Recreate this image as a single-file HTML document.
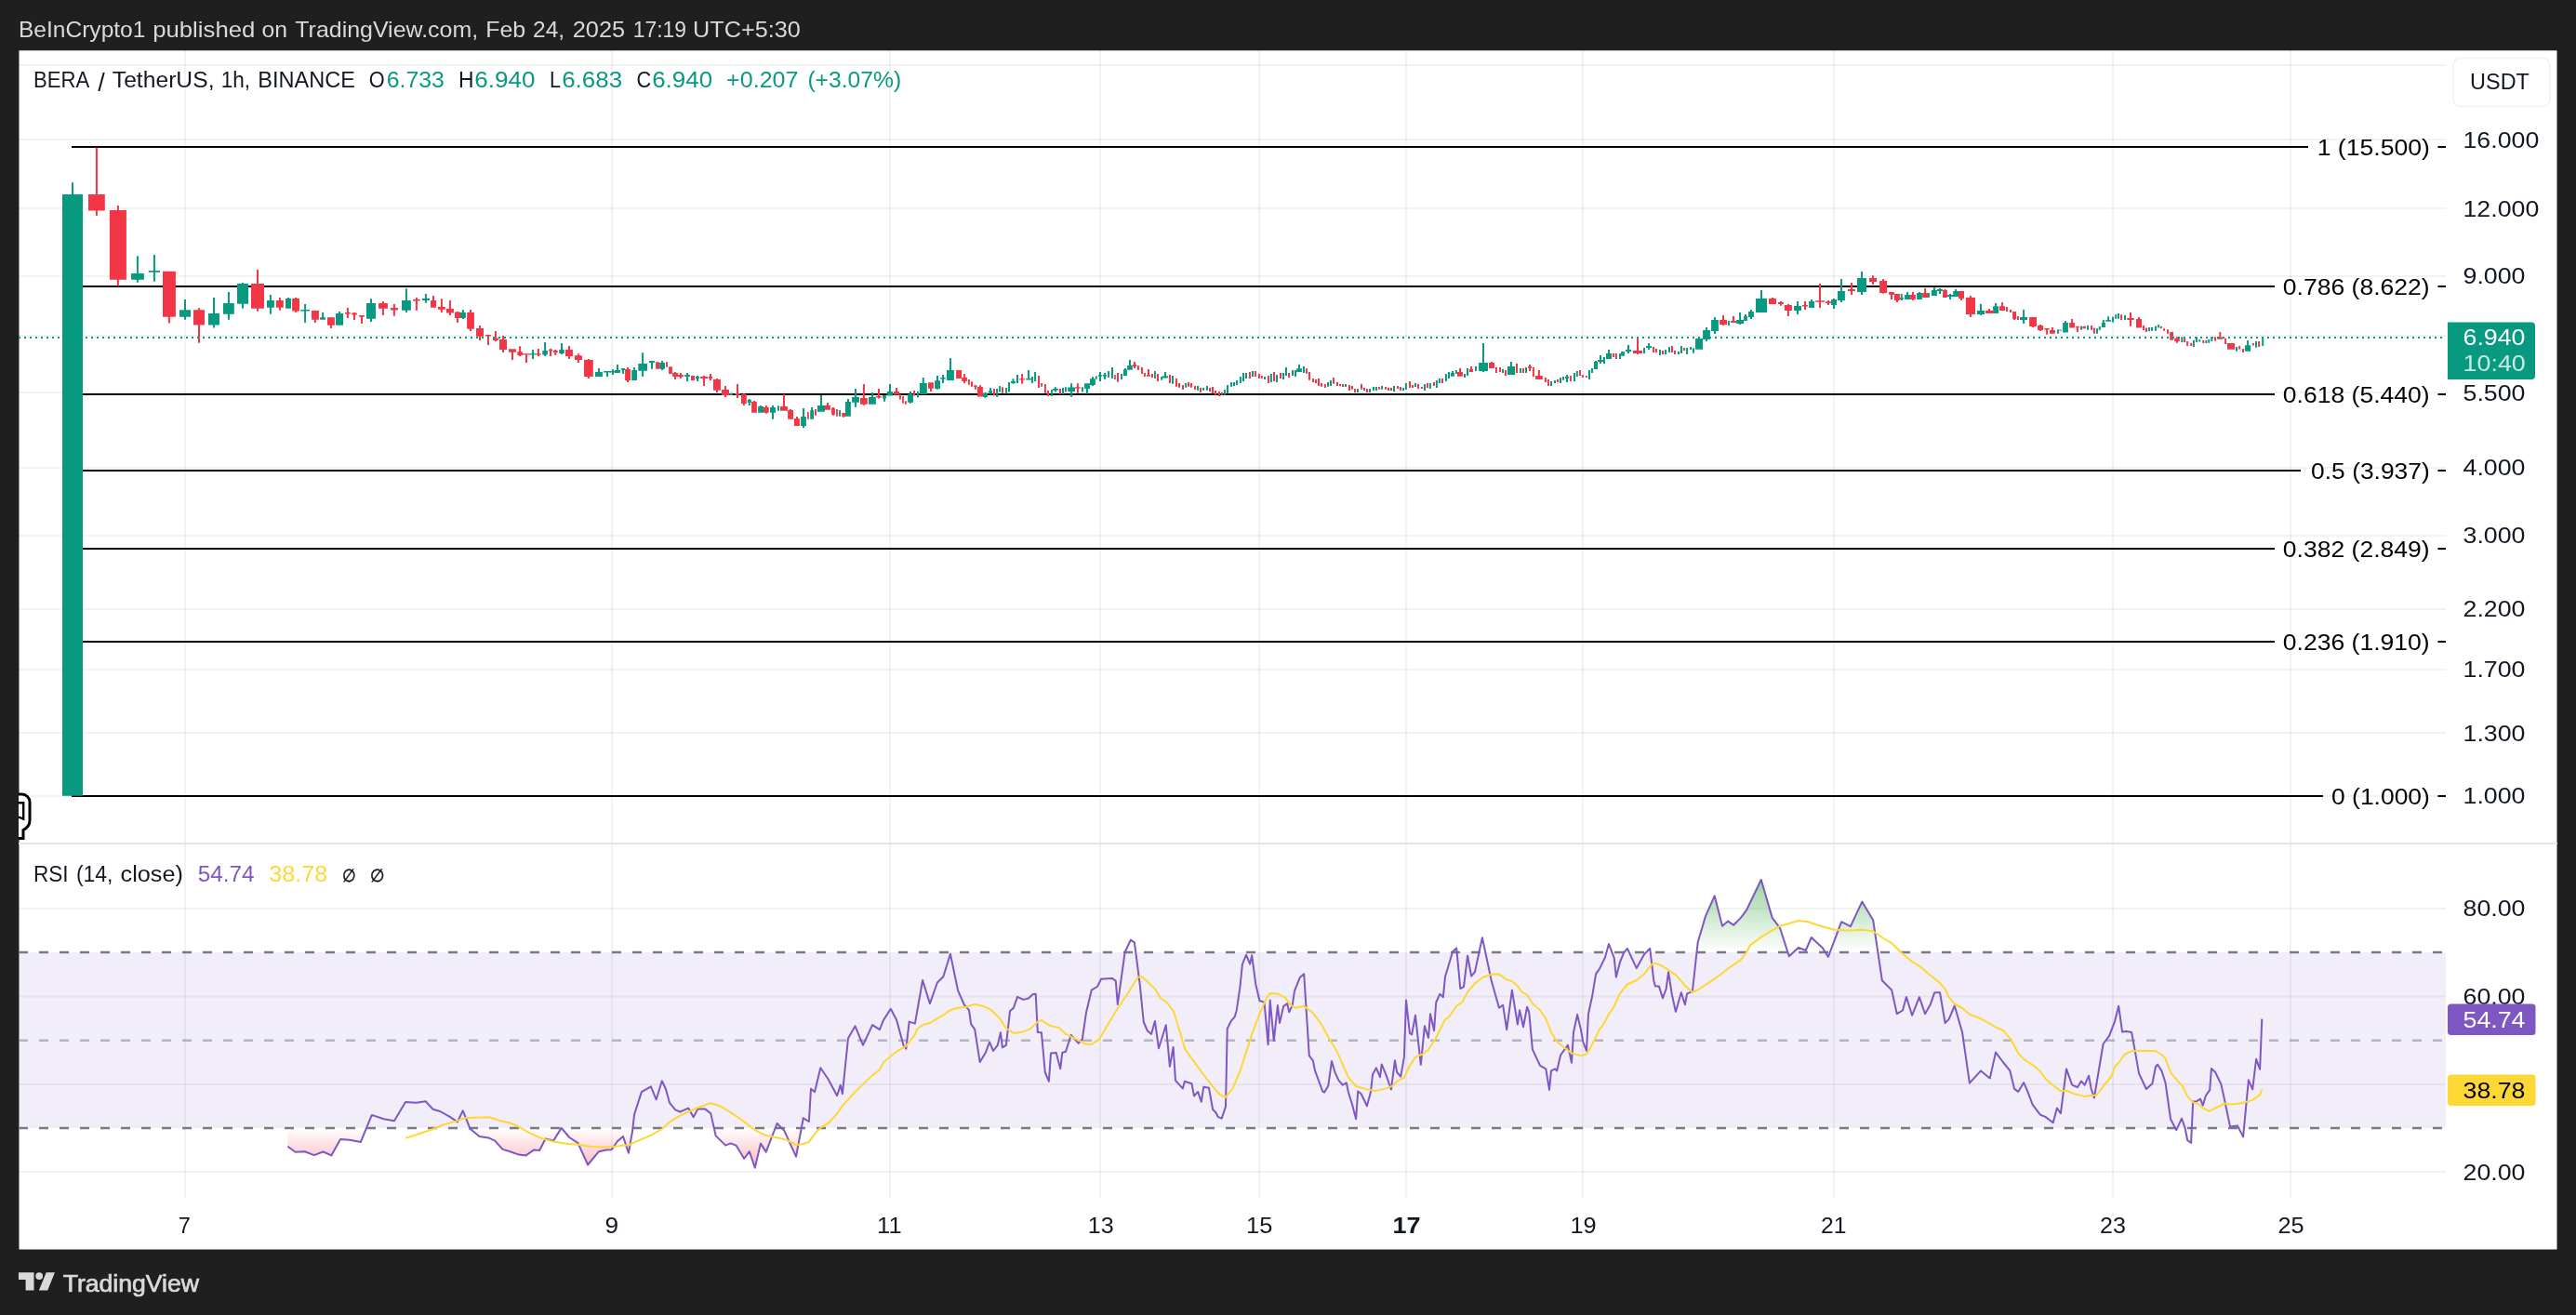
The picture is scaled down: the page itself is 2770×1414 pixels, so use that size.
<!DOCTYPE html><html><head><meta charset="utf-8"><title>BERA / TetherUS chart</title><style>html,body{margin:0;padding:0;background:#1f1f1f;}body{width:2770px;height:1414px;overflow:hidden}svg{display:block;will-change:transform}</style></head><body><svg width="2770" height="1414" viewBox="0 0 2770 1414" font-family='"Liberation Sans", sans-serif'>
<defs>
<linearGradient id="gg" gradientUnits="userSpaceOnUse" x1="0" y1="882" x2="0" y2="1024"><stop offset="0" stop-color="#4caf50" stop-opacity="1"/><stop offset="1" stop-color="#4caf50" stop-opacity="0"/></linearGradient>
<linearGradient id="rg" gradientUnits="userSpaceOnUse" x1="0" y1="1213" x2="0" y2="1333"><stop offset="0" stop-color="#f23645" stop-opacity="0"/><stop offset="1" stop-color="#f23645" stop-opacity="1"/></linearGradient>
<clipPath id="above70"><rect x="20" y="908" width="2610" height="116"/></clipPath>
<clipPath id="below30"><rect x="20" y="1213" width="2610" height="74"/></clipPath>
</defs>
<rect width="2770" height="1414" fill="#1f1f1f"/>
<rect x="20.500" y="54.300" width="2729" height="1289.200" fill="#fff"/>
<path d="M20 70H2630M20 150H2630M20 224H2630M20 297H2630M20 361H2630M20 422H2630M20 503H2630M20 576H2630M20 655H2630M20 720H2630M20 788H2630M20 856H2630M20 977H2630M20 1071.5H2630M20 1166H2630M20 1260H2630" stroke="#0a1a1a" stroke-opacity="0.058" stroke-width="2" fill="none"/>
<path d="M199 54V1288M658 54V1288M957 54V1288M1183 54V1288M1354 54V1288M1512 54V1288M1702 54V1288M1972 54V1288M2272 54V1288M2463 54V1288" stroke="#0a1a1a" stroke-opacity="0.058" stroke-width="2" fill="none"/>
<rect x="20" y="906" width="2730" height="2" fill="#e0e3eb"/>
<rect x="20" y="1024" width="2610" height="189" fill="#7e57c2" fill-opacity="0.1"/>
<polygon clip-path="url(#above70)" fill="url(#gg)" points="309.4,1024 309.4,1232.8 317.6,1238.7 327.7,1238.2 337.7,1242.1 347.5,1238.5 356.3,1242.4 366.1,1225 375.9,1225.8 387.8,1228.1 399.8,1198.9 412.7,1203.3 424,1205.3 436,1185.1 447.6,1185.7 457.7,1184.3 465.5,1192.7 473.2,1195 483.3,1200.6 491.9,1206.4 497.8,1194.3 505.5,1213.7 515.5,1221.9 525.2,1223.4 532.2,1226.6 540.5,1235.9 548.5,1238.2 557.9,1241.6 565.6,1242.4 573.9,1236.6 580.1,1237 586.6,1224.5 595.1,1226.6 603.7,1212.9 612.2,1223 621.5,1229.2 632.1,1252.5 644,1238.2 651.8,1236.6 657.7,1236.3 663.9,1227.3 670,1221.9 675.9,1239.8 680,1216.6 682.1,1198.2 689.9,1174.1 699.9,1168.4 705.7,1182.3 711.8,1162.2 715.9,1171 720,1185.8 726.2,1193.4 731.3,1195.5 740.2,1191.6 745.7,1201.2 750.4,1192.4 758,1192.4 764.2,1197.1 769.7,1221.4 780.2,1231.6 785.7,1229.4 791.5,1231.6 800.1,1245.8 805.9,1238.2 811.8,1255.6 818,1229.6 823.7,1238.6 835.6,1208 843.2,1215.6 856,1243.7 863.8,1202.3 869.9,1206 872,1170.8 876.1,1174.1 882.3,1148.3 890.5,1160.2 900.1,1178.2 903.8,1166.7 905.9,1176.2 912,1116.4 919.6,1103.3 928,1123.8 938.1,1102.1 945.9,1107.2 950,1096.9 957.8,1084.8 964,1096.5 971.6,1124.2 974.3,1127.7 977.7,1098.6 983.9,1100.6 992.1,1054 999.9,1079.1 1007.9,1056.5 1014.3,1050.3 1021.9,1025.7 1030.1,1065.1 1036.9,1080.5 1042,1086.2 1044.1,1101 1048.2,1106.8 1053.7,1142.1 1059.9,1131.8 1064,1120.5 1068.1,1130 1072.8,1123.8 1075.9,1110.3 1077.9,1126.3 1081.9,1123.8 1086,1087.3 1089.9,1083.8 1094,1071.9 1100.4,1074.9 1105.9,1073.5 1110.5,1069.2 1113.7,1068.8 1115.8,1109.9 1119.9,1110.3 1123.8,1153 1127.9,1162.8 1130,1132.4 1135.7,1132 1140.2,1149.3 1142.3,1132 1146,1130.8 1151.7,1112.9 1159.7,1121.8 1163.8,1117.5 1167.9,1089.3 1173.7,1064.7 1179.9,1061 1184,1052.8 1195.9,1051.9 1199.8,1054.8 1201.8,1080.1 1209.6,1024 1215.8,1010.7 1219.9,1013.3 1225.6,1057.5 1229.8,1099 1233.7,1108.2 1238,1111.9 1241.9,1097.9 1246,1127.3 1253.8,1102.3 1257.9,1146.8 1261.6,1125.9 1264,1161.8 1271.8,1170.4 1273.9,1162.8 1281.5,1165.3 1284,1178.6 1288.1,1173.9 1291.8,1184.8 1294.2,1168.8 1300,1169.8 1304.1,1193 1307.6,1196.5 1309.6,1200.8 1313.7,1202.7 1318,1189.9 1319.7,1106.2 1323.6,1098.2 1327.7,1093.4 1329.8,1086.2 1333.4,1061.6 1335.9,1037 1340,1026.7 1344.1,1036.6 1346.2,1027.3 1350.3,1058.5 1354.4,1076 1359.5,1077.6 1363.6,1123.2 1365.7,1075.6 1369.8,1119.1 1373.9,1081.1 1376,1100 1380.1,1082.1 1384.2,1079.1 1386.2,1088.3 1389.7,1081.1 1392,1065.7 1397.9,1050.9 1402.2,1047.2 1407.8,1135.1 1411.9,1140.7 1413.9,1150.9 1422.2,1173.5 1424.2,1174.5 1428.3,1167.4 1432,1141.1 1435.5,1153 1439.6,1161.8 1443.7,1166.7 1447.8,1164.3 1449.9,1174.5 1454,1187.5 1458.1,1203.3 1460.2,1173.5 1463.7,1176.2 1469.9,1189.3 1474,1174.1 1476,1155.4 1479.9,1148.3 1484,1158.1 1485.7,1144.4 1490.4,1155.6 1495.9,1171.5 1500,1140.2 1502.1,1153 1506.2,1157.7 1509.9,1136.6 1512,1075.6 1515.9,1110.9 1518.1,1112.5 1522,1091.8 1527.8,1144.8 1531.9,1103.3 1536,1116 1538,1090.3 1542.1,1108.2 1544.2,1078 1548.3,1068.8 1551.8,1072.3 1554,1050.3 1562.1,1023.2 1566.2,1019.5 1570.3,1063 1574,1061.2 1578.1,1027.7 1582.2,1049.7 1585.9,1045.2 1593.9,1008.2 1603.7,1054.4 1612,1083.8 1616.1,1080.7 1620.2,1107.2 1625.9,1064.7 1631.9,1101.6 1634.1,1086.2 1638,1104.3 1642.1,1082.8 1644.2,1088.3 1647.9,1128.3 1656.1,1145.8 1662.3,1149.3 1666,1171.9 1668,1151.3 1672.1,1149.3 1674.2,1151.5 1678.1,1134.5 1685.9,1123.8 1690,1142.7 1692,1110.3 1696.1,1091 1699.8,1106.4 1702.3,1120.5 1706,1130 1708,1090.3 1712.2,1070.8 1716.1,1047.2 1719.8,1042.1 1725.9,1029.8 1730,1015 1735.8,1030.4 1737.8,1050.7 1741.9,1034.9 1746,1024.6 1749.9,1019.9 1759.8,1041.1 1768,1026.3 1774.2,1019.9 1778.3,1054.4 1779.9,1060.6 1784,1060.6 1787.9,1073.3 1791.6,1063.7 1794.1,1045.2 1797.8,1069.2 1801.9,1087.9 1807.8,1067.2 1811.9,1080.3 1814,1068.6 1819.9,1065.9 1825.7,1013.2 1833.9,985.4 1843.7,963.3 1852,995.7 1858.1,990.6 1864.1,994.7 1871.9,986.9 1878,978.7 1893.8,946 1905.7,986.9 1914,997.8 1923.8,1028.2 1933.9,1018.9 1941.7,1022 1947.8,1008 1959.8,1019.3 1965.9,1029 1980.1,991.2 1989.9,996.1 2002.3,969.6 2014.2,989.5 2023.8,1054.2 2034.1,1064.5 2039.8,1090.2 2046,1086.5 2049.9,1072.1 2056.1,1091.8 2063.9,1072.1 2070,1090.2 2075.8,1079.9 2080.3,1067.2 2086,1067.2 2091.6,1100 2095.7,1095.9 2101.8,1081.5 2110.1,1110.3 2117.9,1164.7 2130,1151.4 2139.8,1159.4 2146,1131.6 2154.2,1142.5 2161.4,1151.4 2166.1,1170.9 2170.2,1173.9 2176.2,1164.1 2180,1172.8 2185.7,1187.9 2193.9,1198.7 2199.4,1200.9 2207.7,1207.3 2211.9,1191.5 2215.9,1197.3 2222,1149.4 2228.2,1166.7 2233.9,1169.2 2237.9,1162.5 2241.8,1166.7 2246.1,1156.6 2248.7,1170.7 2251.9,1180.5 2261.6,1122.5 2268.1,1113.9 2274.1,1098.1 2278.2,1081.8 2282.1,1109.6 2286.4,1108.9 2292.1,1109.9 2296.1,1131.9 2300,1154.1 2307.9,1171 2314.4,1165.2 2318,1147 2320.1,1144.8 2324.5,1151.6 2328.5,1164.2 2334.1,1203.5 2340.3,1215.2 2346,1202.7 2349.6,1212.8 2352.1,1226 2356.1,1228.9 2358.2,1184.6 2361.8,1184.3 2366.1,1181.7 2368.7,1188.6 2371.9,1178.2 2376.2,1172.1 2377.9,1149.1 2382,1152.7 2388.4,1165.9 2392,1182.2 2398.1,1211.6 2406.1,1210.6 2412.1,1222.4 2417.9,1161.3 2422.2,1171.4 2426.1,1138.8 2430.1,1149.8 2432.3,1095.6 2432.3,1024"/>
<polygon clip-path="url(#below30)" fill="url(#rg)" points="309.4,1213 309.4,1232.8 317.6,1238.7 327.7,1238.2 337.7,1242.1 347.5,1238.5 356.3,1242.4 366.1,1225 375.9,1225.8 387.8,1228.1 399.8,1198.9 412.7,1203.3 424,1205.3 436,1185.1 447.6,1185.7 457.7,1184.3 465.5,1192.7 473.2,1195 483.3,1200.6 491.9,1206.4 497.8,1194.3 505.5,1213.7 515.5,1221.9 525.2,1223.4 532.2,1226.6 540.5,1235.9 548.5,1238.2 557.9,1241.6 565.6,1242.4 573.9,1236.6 580.1,1237 586.6,1224.5 595.1,1226.6 603.7,1212.9 612.2,1223 621.5,1229.2 632.1,1252.5 644,1238.2 651.8,1236.6 657.7,1236.3 663.9,1227.3 670,1221.9 675.9,1239.8 680,1216.6 682.1,1198.2 689.9,1174.1 699.9,1168.4 705.7,1182.3 711.8,1162.2 715.9,1171 720,1185.8 726.2,1193.4 731.3,1195.5 740.2,1191.6 745.7,1201.2 750.4,1192.4 758,1192.4 764.2,1197.1 769.7,1221.4 780.2,1231.6 785.7,1229.4 791.5,1231.6 800.1,1245.8 805.9,1238.2 811.8,1255.6 818,1229.6 823.7,1238.6 835.6,1208 843.2,1215.6 856,1243.7 863.8,1202.3 869.9,1206 872,1170.8 876.1,1174.1 882.3,1148.3 890.5,1160.2 900.1,1178.2 903.8,1166.7 905.9,1176.2 912,1116.4 919.6,1103.3 928,1123.8 938.1,1102.1 945.9,1107.2 950,1096.9 957.8,1084.8 964,1096.5 971.6,1124.2 974.3,1127.7 977.7,1098.6 983.9,1100.6 992.1,1054 999.9,1079.1 1007.9,1056.5 1014.3,1050.3 1021.9,1025.7 1030.1,1065.1 1036.9,1080.5 1042,1086.2 1044.1,1101 1048.2,1106.8 1053.7,1142.1 1059.9,1131.8 1064,1120.5 1068.1,1130 1072.8,1123.8 1075.9,1110.3 1077.9,1126.3 1081.9,1123.8 1086,1087.3 1089.9,1083.8 1094,1071.9 1100.4,1074.9 1105.9,1073.5 1110.5,1069.2 1113.7,1068.8 1115.8,1109.9 1119.9,1110.3 1123.8,1153 1127.9,1162.8 1130,1132.4 1135.7,1132 1140.2,1149.3 1142.3,1132 1146,1130.8 1151.7,1112.9 1159.7,1121.8 1163.8,1117.5 1167.9,1089.3 1173.7,1064.7 1179.9,1061 1184,1052.8 1195.9,1051.9 1199.8,1054.8 1201.8,1080.1 1209.6,1024 1215.8,1010.7 1219.9,1013.3 1225.6,1057.5 1229.8,1099 1233.7,1108.2 1238,1111.9 1241.9,1097.9 1246,1127.3 1253.8,1102.3 1257.9,1146.8 1261.6,1125.9 1264,1161.8 1271.8,1170.4 1273.9,1162.8 1281.5,1165.3 1284,1178.6 1288.1,1173.9 1291.8,1184.8 1294.2,1168.8 1300,1169.8 1304.1,1193 1307.6,1196.5 1309.6,1200.8 1313.7,1202.7 1318,1189.9 1319.7,1106.2 1323.6,1098.2 1327.7,1093.4 1329.8,1086.2 1333.4,1061.6 1335.9,1037 1340,1026.7 1344.1,1036.6 1346.2,1027.3 1350.3,1058.5 1354.4,1076 1359.5,1077.6 1363.6,1123.2 1365.7,1075.6 1369.8,1119.1 1373.9,1081.1 1376,1100 1380.1,1082.1 1384.2,1079.1 1386.2,1088.3 1389.7,1081.1 1392,1065.7 1397.9,1050.9 1402.2,1047.2 1407.8,1135.1 1411.9,1140.7 1413.9,1150.9 1422.2,1173.5 1424.2,1174.5 1428.3,1167.4 1432,1141.1 1435.5,1153 1439.6,1161.8 1443.7,1166.7 1447.8,1164.3 1449.9,1174.5 1454,1187.5 1458.1,1203.3 1460.2,1173.5 1463.7,1176.2 1469.9,1189.3 1474,1174.1 1476,1155.4 1479.9,1148.3 1484,1158.1 1485.7,1144.4 1490.4,1155.6 1495.9,1171.5 1500,1140.2 1502.1,1153 1506.2,1157.7 1509.9,1136.6 1512,1075.6 1515.9,1110.9 1518.1,1112.5 1522,1091.8 1527.8,1144.8 1531.9,1103.3 1536,1116 1538,1090.3 1542.1,1108.2 1544.2,1078 1548.3,1068.8 1551.8,1072.3 1554,1050.3 1562.1,1023.2 1566.2,1019.5 1570.3,1063 1574,1061.2 1578.1,1027.7 1582.2,1049.7 1585.9,1045.2 1593.9,1008.2 1603.7,1054.4 1612,1083.8 1616.1,1080.7 1620.2,1107.2 1625.9,1064.7 1631.9,1101.6 1634.1,1086.2 1638,1104.3 1642.1,1082.8 1644.2,1088.3 1647.9,1128.3 1656.1,1145.8 1662.3,1149.3 1666,1171.9 1668,1151.3 1672.1,1149.3 1674.2,1151.5 1678.1,1134.5 1685.9,1123.8 1690,1142.7 1692,1110.3 1696.1,1091 1699.8,1106.4 1702.3,1120.5 1706,1130 1708,1090.3 1712.2,1070.8 1716.1,1047.2 1719.8,1042.1 1725.9,1029.8 1730,1015 1735.8,1030.4 1737.8,1050.7 1741.9,1034.9 1746,1024.6 1749.9,1019.9 1759.8,1041.1 1768,1026.3 1774.2,1019.9 1778.3,1054.4 1779.9,1060.6 1784,1060.6 1787.9,1073.3 1791.6,1063.7 1794.1,1045.2 1797.8,1069.2 1801.9,1087.9 1807.8,1067.2 1811.9,1080.3 1814,1068.6 1819.9,1065.9 1825.7,1013.2 1833.9,985.4 1843.7,963.3 1852,995.7 1858.1,990.6 1864.1,994.7 1871.9,986.9 1878,978.7 1893.8,946 1905.7,986.9 1914,997.8 1923.8,1028.2 1933.9,1018.9 1941.7,1022 1947.8,1008 1959.8,1019.3 1965.9,1029 1980.1,991.2 1989.9,996.1 2002.3,969.6 2014.2,989.5 2023.8,1054.2 2034.1,1064.5 2039.8,1090.2 2046,1086.5 2049.9,1072.1 2056.1,1091.8 2063.9,1072.1 2070,1090.2 2075.8,1079.9 2080.3,1067.2 2086,1067.2 2091.6,1100 2095.7,1095.9 2101.8,1081.5 2110.1,1110.3 2117.9,1164.7 2130,1151.4 2139.8,1159.4 2146,1131.6 2154.2,1142.5 2161.4,1151.4 2166.1,1170.9 2170.2,1173.9 2176.2,1164.1 2180,1172.8 2185.7,1187.9 2193.9,1198.7 2199.4,1200.9 2207.7,1207.3 2211.9,1191.5 2215.9,1197.3 2222,1149.4 2228.2,1166.7 2233.9,1169.2 2237.9,1162.5 2241.8,1166.7 2246.1,1156.6 2248.7,1170.7 2251.9,1180.5 2261.6,1122.5 2268.1,1113.9 2274.1,1098.1 2278.2,1081.8 2282.1,1109.6 2286.4,1108.9 2292.1,1109.9 2296.1,1131.9 2300,1154.1 2307.9,1171 2314.4,1165.2 2318,1147 2320.1,1144.8 2324.5,1151.6 2328.5,1164.2 2334.1,1203.5 2340.3,1215.2 2346,1202.7 2349.6,1212.8 2352.1,1226 2356.1,1228.9 2358.2,1184.6 2361.8,1184.3 2366.1,1181.7 2368.7,1188.6 2371.9,1178.2 2376.2,1172.1 2377.9,1149.1 2382,1152.7 2388.4,1165.9 2392,1182.2 2398.1,1211.6 2406.1,1210.6 2412.1,1222.4 2417.9,1161.3 2422.2,1171.4 2426.1,1138.8 2430.1,1149.8 2432.3,1095.6 2432.3,1213"/>
<path d="M20 1024H2630M20 1213H2630" stroke="#787b86" stroke-width="2.4" stroke-dasharray="10 12" fill="none"/>
<path d="M20 1118.8H2630" stroke="#787b86" stroke-opacity="0.5" stroke-width="2.4" stroke-dasharray="10 12" fill="none"/>
<polyline points="309.4,1232.8 317.6,1238.7 327.7,1238.2 337.7,1242.1 347.5,1238.5 356.3,1242.4 366.1,1225 375.9,1225.8 387.8,1228.1 399.8,1198.9 412.7,1203.3 424,1205.3 436,1185.1 447.6,1185.7 457.7,1184.3 465.5,1192.7 473.2,1195 483.3,1200.6 491.9,1206.4 497.8,1194.3 505.5,1213.7 515.5,1221.9 525.2,1223.4 532.2,1226.6 540.5,1235.9 548.5,1238.2 557.9,1241.6 565.6,1242.4 573.9,1236.6 580.1,1237 586.6,1224.5 595.1,1226.6 603.7,1212.9 612.2,1223 621.5,1229.2 632.1,1252.5 644,1238.2 651.8,1236.6 657.7,1236.3 663.9,1227.3 670,1221.9 675.9,1239.8 680,1216.6 682.1,1198.2 689.9,1174.1 699.9,1168.4 705.7,1182.3 711.8,1162.2 715.9,1171 720,1185.8 726.2,1193.4 731.3,1195.5 740.2,1191.6 745.7,1201.2 750.4,1192.4 758,1192.4 764.2,1197.1 769.7,1221.4 780.2,1231.6 785.7,1229.4 791.5,1231.6 800.1,1245.8 805.9,1238.2 811.8,1255.6 818,1229.6 823.7,1238.6 835.6,1208 843.2,1215.6 856,1243.7 863.8,1202.3 869.9,1206 872,1170.8 876.1,1174.1 882.3,1148.3 890.5,1160.2 900.1,1178.2 903.8,1166.7 905.9,1176.2 912,1116.4 919.6,1103.3 928,1123.8 938.1,1102.1 945.9,1107.2 950,1096.9 957.8,1084.8 964,1096.5 971.6,1124.2 974.3,1127.7 977.7,1098.6 983.9,1100.6 992.1,1054 999.9,1079.1 1007.9,1056.5 1014.3,1050.3 1021.9,1025.7 1030.1,1065.1 1036.9,1080.5 1042,1086.2 1044.1,1101 1048.2,1106.8 1053.7,1142.1 1059.9,1131.8 1064,1120.5 1068.1,1130 1072.8,1123.8 1075.9,1110.3 1077.9,1126.3 1081.9,1123.8 1086,1087.3 1089.9,1083.8 1094,1071.9 1100.4,1074.9 1105.9,1073.5 1110.5,1069.2 1113.7,1068.8 1115.8,1109.9 1119.9,1110.3 1123.8,1153 1127.9,1162.8 1130,1132.4 1135.7,1132 1140.2,1149.3 1142.3,1132 1146,1130.8 1151.7,1112.9 1159.7,1121.8 1163.8,1117.5 1167.9,1089.3 1173.7,1064.7 1179.9,1061 1184,1052.8 1195.9,1051.9 1199.8,1054.8 1201.8,1080.1 1209.6,1024 1215.8,1010.7 1219.9,1013.3 1225.6,1057.5 1229.8,1099 1233.7,1108.2 1238,1111.9 1241.9,1097.9 1246,1127.3 1253.8,1102.3 1257.9,1146.8 1261.6,1125.9 1264,1161.8 1271.8,1170.4 1273.9,1162.8 1281.5,1165.3 1284,1178.6 1288.1,1173.9 1291.8,1184.8 1294.2,1168.8 1300,1169.8 1304.1,1193 1307.6,1196.5 1309.6,1200.8 1313.7,1202.7 1318,1189.9 1319.7,1106.2 1323.6,1098.2 1327.7,1093.4 1329.8,1086.2 1333.4,1061.6 1335.9,1037 1340,1026.7 1344.1,1036.6 1346.2,1027.3 1350.3,1058.5 1354.4,1076 1359.5,1077.6 1363.6,1123.2 1365.7,1075.6 1369.8,1119.1 1373.9,1081.1 1376,1100 1380.1,1082.1 1384.2,1079.1 1386.2,1088.3 1389.7,1081.1 1392,1065.7 1397.9,1050.9 1402.2,1047.2 1407.8,1135.1 1411.9,1140.7 1413.9,1150.9 1422.2,1173.5 1424.2,1174.5 1428.3,1167.4 1432,1141.1 1435.5,1153 1439.6,1161.8 1443.7,1166.7 1447.8,1164.3 1449.9,1174.5 1454,1187.5 1458.1,1203.3 1460.2,1173.5 1463.7,1176.2 1469.9,1189.3 1474,1174.1 1476,1155.4 1479.9,1148.3 1484,1158.1 1485.7,1144.4 1490.4,1155.6 1495.9,1171.5 1500,1140.2 1502.1,1153 1506.2,1157.7 1509.9,1136.6 1512,1075.6 1515.9,1110.9 1518.1,1112.5 1522,1091.8 1527.8,1144.8 1531.9,1103.3 1536,1116 1538,1090.3 1542.1,1108.2 1544.2,1078 1548.3,1068.8 1551.8,1072.3 1554,1050.3 1562.1,1023.2 1566.2,1019.5 1570.3,1063 1574,1061.2 1578.1,1027.7 1582.2,1049.7 1585.9,1045.2 1593.9,1008.2 1603.7,1054.4 1612,1083.8 1616.1,1080.7 1620.2,1107.2 1625.9,1064.7 1631.9,1101.6 1634.1,1086.2 1638,1104.3 1642.1,1082.8 1644.2,1088.3 1647.9,1128.3 1656.1,1145.8 1662.3,1149.3 1666,1171.9 1668,1151.3 1672.1,1149.3 1674.2,1151.5 1678.1,1134.5 1685.9,1123.8 1690,1142.7 1692,1110.3 1696.1,1091 1699.8,1106.4 1702.3,1120.5 1706,1130 1708,1090.3 1712.2,1070.8 1716.1,1047.2 1719.8,1042.1 1725.9,1029.8 1730,1015 1735.8,1030.4 1737.8,1050.7 1741.9,1034.9 1746,1024.6 1749.9,1019.9 1759.8,1041.1 1768,1026.3 1774.2,1019.9 1778.3,1054.4 1779.9,1060.6 1784,1060.6 1787.9,1073.3 1791.6,1063.7 1794.1,1045.2 1797.8,1069.2 1801.9,1087.9 1807.8,1067.2 1811.9,1080.3 1814,1068.6 1819.9,1065.9 1825.7,1013.2 1833.9,985.4 1843.7,963.3 1852,995.7 1858.1,990.6 1864.1,994.7 1871.9,986.9 1878,978.7 1893.8,946 1905.7,986.9 1914,997.8 1923.8,1028.2 1933.9,1018.9 1941.7,1022 1947.8,1008 1959.8,1019.3 1965.9,1029 1980.1,991.2 1989.9,996.1 2002.3,969.6 2014.2,989.5 2023.8,1054.2 2034.1,1064.5 2039.8,1090.2 2046,1086.5 2049.9,1072.1 2056.1,1091.8 2063.9,1072.1 2070,1090.2 2075.8,1079.9 2080.3,1067.2 2086,1067.2 2091.6,1100 2095.7,1095.9 2101.8,1081.5 2110.1,1110.3 2117.9,1164.7 2130,1151.4 2139.8,1159.4 2146,1131.6 2154.2,1142.5 2161.4,1151.4 2166.1,1170.9 2170.2,1173.9 2176.2,1164.1 2180,1172.8 2185.7,1187.9 2193.9,1198.7 2199.4,1200.9 2207.7,1207.3 2211.9,1191.5 2215.9,1197.3 2222,1149.4 2228.2,1166.7 2233.9,1169.2 2237.9,1162.5 2241.8,1166.7 2246.1,1156.6 2248.7,1170.7 2251.9,1180.5 2261.6,1122.5 2268.1,1113.9 2274.1,1098.1 2278.2,1081.8 2282.1,1109.6 2286.4,1108.9 2292.1,1109.9 2296.1,1131.9 2300,1154.1 2307.9,1171 2314.4,1165.2 2318,1147 2320.1,1144.8 2324.5,1151.6 2328.5,1164.2 2334.1,1203.5 2340.3,1215.2 2346,1202.7 2349.6,1212.8 2352.1,1226 2356.1,1228.9 2358.2,1184.6 2361.8,1184.3 2366.1,1181.7 2368.7,1188.6 2371.9,1178.2 2376.2,1172.1 2377.9,1149.1 2382,1152.7 2388.4,1165.9 2392,1182.2 2398.1,1211.6 2406.1,1210.6 2412.1,1222.4 2417.9,1161.3 2422.2,1171.4 2426.1,1138.8 2430.1,1149.8 2432.3,1095.6" fill="none" stroke="#7e57c2" stroke-width="2" stroke-linejoin="round"/>
<polyline points="436,1223.9 447.6,1220.3 465.5,1214.1 476.3,1209.5 490.3,1205.6 499.6,1202.2 512,1201.7 526,1201.2 538.4,1205.3 548.5,1207.5 557.9,1211.5 569.5,1218.3 581.9,1223.9 595.1,1227.6 608.3,1229.7 621.5,1230.7 634.7,1232.8 647.1,1233.5 659.6,1233.1 668.9,1231.7 676.6,1231.2 680,1229.4 699.9,1220.7 711.8,1214 720,1206.4 731.3,1199.6 750.4,1191 764.2,1186.2 774.5,1189.3 785.7,1196.1 800.1,1206 811.8,1215.2 823.7,1221.1 835.6,1223.2 846.3,1225.9 856,1231 863.8,1230 869.9,1227.9 876.1,1219.1 882.3,1212.5 890.5,1208 900.1,1197.5 905.9,1188.9 919.6,1174.1 938.1,1156.1 945.9,1150.5 950,1142.3 964,1130.8 974.3,1124.6 983.9,1112.3 986,1106.8 992.1,1102.1 999.9,1100 1014.3,1091.4 1021.9,1086.2 1030.1,1083.8 1039.3,1082.8 1048.2,1079.7 1057.8,1082.1 1066,1086.2 1070,1090.3 1075.1,1095.1 1081.9,1105.7 1089.9,1110.9 1100.4,1109.4 1108,1106.4 1115.8,1098.6 1119.9,1097.1 1130,1103.3 1138.8,1105.1 1146,1111.9 1159.7,1118.7 1167.9,1122.8 1173.7,1122.8 1181.9,1117.7 1193.2,1098.6 1201.8,1084.2 1211.7,1069.8 1219.9,1056.5 1224,1050.7 1228.1,1050.3 1241.9,1063.2 1248,1073.5 1253.8,1077 1262,1087.3 1268.2,1107.8 1274.3,1128.3 1284,1141.7 1294.2,1155.6 1304.1,1168.4 1311.7,1177 1317.5,1180.1 1325.7,1170.4 1333.4,1151.9 1340,1131.4 1346.2,1111.9 1354.4,1090.3 1361.6,1073.9 1365.7,1068.2 1373.9,1068.4 1382.1,1072.9 1387.3,1080.1 1392.4,1083.8 1402.2,1081.7 1411.9,1089.3 1420.1,1100 1428.3,1115 1437.6,1130.4 1443.7,1144.4 1449.9,1158.5 1458.1,1168 1469.9,1171.5 1479.9,1172.9 1490.4,1170.4 1498,1167.4 1502.1,1162.8 1509.9,1158.7 1515.9,1145.8 1522,1136.6 1529.8,1133.5 1536,1128.7 1544.2,1116 1554,1096.1 1558.2,1093.4 1566.2,1081.7 1572.3,1077.6 1578.1,1066.7 1585.9,1057.5 1593.9,1051.3 1603.7,1047.8 1612,1047.6 1620.2,1053.4 1625.9,1055 1631.9,1060.2 1636,1066.1 1642.1,1069.8 1647.9,1079.1 1656.1,1086.2 1662.3,1095.5 1668,1109.9 1674.2,1120.1 1681.8,1126.3 1690,1132.4 1699.8,1135.1 1706,1133.5 1712.2,1122.8 1719.8,1107.4 1725.9,1098.6 1730,1090.3 1735.8,1082.1 1741.9,1068.4 1749.9,1058.5 1759.8,1054 1768,1047.2 1776.2,1037 1779.9,1035.5 1787.9,1039 1794.1,1043.1 1801.9,1048.3 1808,1055 1811.9,1059.8 1819.9,1067 1825.7,1064.5 1838,1056.3 1852,1046.6 1858.1,1041.5 1871.9,1032.1 1878,1024 1882.1,1016.2 1893.8,1007.6 1905.7,1000.4 1914,995.7 1923.8,993 1933.9,990 1943.7,991 1956.1,995.3 1972.1,999.8 1989.9,1000.4 2002.3,999.8 2014.2,1001.3 2023.8,1008 2034.1,1014.2 2043.9,1023.8 2056.1,1034.1 2063.9,1038.8 2075.8,1048.7 2086,1056.9 2091.6,1063.5 2095.7,1072.3 2101.8,1079.5 2110.1,1084 2117.9,1090.8 2130,1095.3 2139.8,1100.8 2146,1104.5 2154.2,1108.2 2162.4,1117.9 2170.2,1132.3 2176.2,1139 2180,1141.5 2187.2,1146.2 2193.9,1152 2200.1,1160.6 2207.7,1167.1 2215.9,1173.1 2222,1172.8 2230.3,1176.1 2241.8,1179 2248.7,1177.9 2254.7,1177.4 2261.6,1168.1 2270.6,1157 2274.1,1147 2280.6,1139.8 2284.2,1134 2292.1,1130.4 2300,1129.7 2307.9,1130 2318,1130 2324.5,1134 2328.5,1138.3 2334.1,1153.1 2340.3,1160.6 2346.7,1167.8 2352.1,1178.6 2358.2,1185.3 2364.7,1187.6 2368.7,1191.5 2375.5,1194.8 2384.1,1190.5 2392,1186.5 2398.1,1187.5 2406.1,1186.9 2414.3,1185.3 2422.2,1182.9 2430.1,1177.1 2432.3,1171.4" fill="none" stroke="#fdd835" stroke-width="2" stroke-linejoin="round"/>
<path d="M77 158H2482M2621.5 158H2630M89 308H2446M2621.5 308H2630M89 424H2446M2621.5 424H2630M89 506H2474M2621.5 506H2630M89 590H2446M2621.5 590H2630M89 690H2446M2621.5 690H2630M77 856H2498M2621.5 856H2630" stroke="#000" stroke-width="2.2" fill="none"/>
<path d="M67 209H89V855.7H67ZM77 196.2H79V855.7H77ZM141 294H154.9V300.7H141ZM146.9 275.2H148.9V303.7H146.9ZM159.8 290.9H172.1V292.8H159.8ZM164.9 274H166.9V302.7H164.9ZM193 333.2H205V340.7H193ZM198 321.9H200V343.7H198ZM224 337H236V349.6H224ZM229 320H231V352.5H229ZM240 326H251.8V337.7H240ZM244.9 314H246.9V343.7H244.9ZM255 305H267V326.8H255ZM260 304H262V331.8H260ZM287 322.9H294.9V330.8H287ZM289.9 317H291.9V337.7H289.9ZM307 321H313V331.8H307ZM309 320H311V331.8H309ZM323.2 333.1H333V334.6H323.2ZM327.1 327H329.1V346.9H327.1ZM344.1 341.2H350V343.7H344.1ZM346.1 336.1H348.1V343.7H346.1ZM361 337.1H369V349.7H361ZM364 335.1H366V349.7H364ZM394 326H404V342.7H394ZM398 321.2H400V345.9H398ZM432 323H441.9V333.8H432ZM435.9 310.2H437.9V335.9H435.9ZM453.9 321H462V323H453.9ZM456.9 315.9H458.9V325.8H456.9ZM495 336.1H500.9V341.9H495ZM496.9 333.1H498.9V342.9H496.9ZM570 380.2H576V381.6H570ZM572 376.1H574V385.9H572ZM583.3 377.1H588.9V381.6H583.3ZM585.1 368.1H587.1V382.9H585.1ZM601.2 376.1H606.8V379.9H601.2ZM603 369.1H605V380.9H603ZM640 400H647.9V404.9H640ZM643 396H645V404.9H643ZM649.1 399H657V400.6H649.1ZM652 399H654V404.9H652ZM657 399H661V400.6H657ZM658 397H660V402.9H658ZM661 398H666.9V400.9H661ZM663 392H665V400.9H663ZM668.1 396H672.1V398H668.1ZM669.1 396H671.1V401.9H669.1ZM679.2 398H685V408.9H679.2ZM681.1 395H683.1V408.9H681.1ZM686.3 391H696V398.8H686.3ZM690.1 379.2H692.1V404.9H690.1ZM698 388.1H703.9V390H698ZM700 388.1H702V396.8H700ZM709.2 390H715V396.8H709.2ZM711.1 388.1H713.1V398H711.1ZM736.2 403.1H742V404.9H736.2ZM738.1 400.9H740.1V410H738.1ZM748 405.1H751.9V406.9H748ZM749 404.1H751V410H749ZM784.2 422.8H788V425.1H784.2ZM803.8 430.1H807.9V432.9H803.8ZM804.8 429.1H806.8V435.9H804.8ZM815.1 437H821V443.8H815.1ZM817 436H819V443.8H817ZM828 438H834V443.8H828ZM830 436H832V450.8H830ZM836 436.2H838V441.8H836ZM861.1 448.1H866.9V457.9H861.1ZM863 439H865V459.9H863ZM871.2 441H875V450.8H871.2ZM872.1 438H874.1V450.8H872.1ZM879 436H887V442.8H879ZM882 425.1H884V442.8H882ZM902.1 441H904V447.8H902.1ZM909 432H914.9V447.8H909ZM911 429.1H913V447.8H911ZM916.1 427.1H923.9V432.7H916.1ZM919 418H921V437.7H919ZM934 427.1H941.9V434.7H934ZM937 422.1H939V434.7H937ZM949.1 425.1H952.9V428.6H949.1ZM950 425.1H952V431.7H950ZM953.9 421.1H960V425.6H953.9ZM956 413H958V425.6H956ZM976.1 424.1H982V432.7H976.1ZM978 421.1H980V433.7H978ZM986 421.1H987.9V427.6H986ZM988.9 412H996.8V423.9H988.9ZM991.8 406.1H993.8V423.9H991.8ZM1005.1 409.2H1011V418H1005.1ZM1007 404.1H1009V418.8H1007ZM1011.1 406.1H1016.8V407.6H1011.1ZM1013 403.1H1015V412H1013ZM1018 398.1H1025.9V409H1018ZM1021 385H1023V409H1021ZM1057 422.8H1062V427.1H1057ZM1058.5 422H1060.5V427.8H1058.5ZM1063.2 420.1H1066.9V423.8H1063.2ZM1064.1 417.1H1066.1V423.8H1064.1ZM1071.1 418.1H1073.1V426.7H1071.1ZM1074.1 415H1076V421.6H1074.1ZM1081.1 417H1083V423.6H1081.1ZM1084 411.1H1086V421.6H1084ZM1087 410H1091.9V411.9H1087ZM1088.5 407.3H1090.5V412.7H1088.5ZM1093 403H1095V412H1093ZM1103.2 407H1109V408.6H1103.2ZM1105.1 398H1107.1V408.6H1105.1ZM1109 405.1H1111V411.9H1109ZM1112.1 399.9H1114.1V410H1112.1ZM1130 419.1H1131.9V425.9H1130ZM1131.9 418.1H1137.9V419.7H1131.9ZM1133.9 416.2H1135.9V421.6H1133.9ZM1142 417.1H1144V424H1142ZM1145 416.2H1146.9V421.6H1145ZM1148.2 416.4H1156V420.9H1148.2ZM1151.1 412.2H1153.1V426.8H1151.1ZM1163 416.2H1164.9V421.6H1163ZM1166.1 412.2H1172V418H1166.1ZM1168 412.2H1170V423.8H1168ZM1172 407.3H1177.9V413.9H1172ZM1174 405.3H1176V414.9H1174ZM1177.9 404.2H1179.8V407.7H1177.9ZM1181 403H1184.9V404.8H1181ZM1182 400.1H1184V410H1182ZM1186 403H1189.9V404.8H1186ZM1187 401H1189V407.8H1187ZM1191.1 399.1H1193V405.9H1191.1ZM1195 395H1197V406.9H1195ZM1205 402.1H1207V407.9H1205ZM1208 397.2H1211.9V403.9H1208ZM1209 396H1211V403.9H1209ZM1212.1 393.1H1217.9V397.7H1212.1ZM1214 386.9H1216V397.7H1214ZM1241 399H1242.9V406.9H1241ZM1248.1 404.9H1250.1V408.8H1248.1ZM1250.1 404.2H1255.9V406.6H1250.1ZM1252 400.1H1254V406.6H1252ZM1260 404H1262V412.7H1260ZM1274.1 411.9H1276.1V416.8H1274.1ZM1287 415H1289V419.7H1287ZM1293 417H1295V419.7H1293ZM1297 415H1299V419.7H1297ZM1315.9 419.1H1317.9V424.7H1315.9ZM1319 414H1321V423.2H1319ZM1323 411H1325V415.8H1323ZM1326 411H1328V414.9H1326ZM1329 409.1H1331V413.9H1329ZM1332.9 405.1H1334.9V411.9H1332.9ZM1336 401.1H1338V410H1336ZM1339 401.1H1341V406.9H1339ZM1346 399.1H1348V404.9H1346ZM1359 405.1H1361V407.9H1359ZM1365.9 402H1367.9V410.9H1365.9ZM1372 403H1374V410.9H1372ZM1379 401.1H1381V407.9H1379ZM1382 395H1384V403.9H1382ZM1389 398.1H1391V403.9H1389ZM1392 398.1H1394V404.9H1392ZM1394.1 396.2H1399.9V399.9H1394.1ZM1396 392.1H1398V399.9H1396ZM1401 394.1H1403V400.9H1401ZM1427 411H1429V415.8H1427ZM1430 409.1H1432V414.9H1430ZM1446 413H1448V415.9H1446ZM1459 417.9H1461V421.9H1459ZM1471.9 417.9H1473.9V421.9H1471.9ZM1476 415.9H1478V420H1476ZM1479 415.9H1481V420H1479ZM1485 414.9H1487V418.8H1485ZM1498 414.9H1500V421H1498ZM1508 416.9H1510V420H1508ZM1510.9 412H1512.9V419H1510.9ZM1521 412H1523V415.9H1521ZM1531 413H1533V420H1531ZM1536.9 412H1538.9V417.9H1536.9ZM1543.9 408.9H1545.9V416.9H1543.9ZM1546.9 407H1548.9V412H1546.9ZM1553.9 402H1555.9V410H1553.9ZM1557 399.9H1559V406.9H1557ZM1560 400.9H1563.9V404.8H1560ZM1561 399H1563V404.8H1561ZM1564.9 398H1566.9V402H1564.9ZM1574 402H1576V406H1574ZM1577 396.1H1579V404.1H1577ZM1586 394.1H1588V399H1586ZM1590.1 390.1H1600V399H1590.1ZM1594 369.1H1596V399.9H1594ZM1615 397.1H1617V400.9H1615ZM1621 394.1H1629.1V402.9H1621ZM1624 389.1H1626V402.9H1624ZM1634 396H1636V400.9H1634ZM1640 395.1H1642V400.9H1640ZM1667 410H1669V415H1667ZM1671 409H1673V411.9H1671ZM1677 405.9H1679V411.9H1677ZM1680 404.9H1682V408.8H1680ZM1683 404.9H1686.9V406.9H1683ZM1684 403H1686V411H1684ZM1692 400.9H1694V410H1692ZM1694.9 398.9H1696.9V404.9H1694.9ZM1708 398.1H1710V407.9H1708ZM1711 396H1713V400.9H1711ZM1713.9 389H1718V396.9H1713.9ZM1715 388H1717V396.9H1715ZM1718 387.1H1724V389H1718ZM1720 382H1722V391.1H1720ZM1724 384.1H1726V391.1H1724ZM1727 380.1H1733V385.9H1727ZM1729 376H1731V385.9H1729ZM1741 380.1H1743V385.9H1741ZM1743.1 378H1746.9V382.8H1743.1ZM1748 376H1754.1V378H1748ZM1750 371H1752V380.1H1750ZM1767 374H1769V380.1H1767ZM1770 371.9H1776V373.9H1770ZM1772 369H1774V376H1772ZM1784 376H1786V382H1784ZM1790 376H1792V381H1790ZM1794 373.1H1796V379.1H1794ZM1804 378H1806V381H1804ZM1807 371.9H1809V380.1H1807ZM1813 374H1815V381H1813ZM1817 373.1H1819V376H1817ZM1820 374.2H1822V379.8H1820ZM1823 364.1H1831V375.8H1823ZM1826 362.2H1828V375.8H1826ZM1831.1 355.1H1838.9V364.9H1831.1ZM1834 352.1H1836V366.9H1834ZM1840.1 344.1H1847.9V356H1840.1ZM1843 341.1H1845V358.9H1843ZM1857.9 345H1859.9V349.9H1857.9ZM1867.1 344.1H1875.1V348H1867.1ZM1870.1 336H1872.1V349H1870.1ZM1875.1 340.1H1878.9V345H1875.1ZM1876 338.1H1878V345H1876ZM1880 335H1885.9V341H1880ZM1882 333.1H1884V343H1882ZM1888 321.1H1900.1V336H1888ZM1893 312.1H1895V336H1893ZM1929 329.1H1937V334H1929ZM1932 324H1934V338H1932ZM1945.1 324H1951.1V330.9H1945.1ZM1947.1 322H1949.1V330.9H1947.1ZM1969 322H1975V328H1969ZM1971 321H1973V331.9H1971ZM1976 313.1H1983.9V323H1976ZM1979 300.1H1981V324.9H1979ZM1997 299.1H2007V313.9H1997ZM2001 292.1H2003V316.9H2001ZM2043.1 320.1H2046.6V322H2043.1ZM2043.8 316H2045.8V323H2043.8ZM2048.1 317H2054V321.9H2048.1ZM2050.1 314H2052.1V321.9H2050.1ZM2061.1 315H2066.9V321.9H2061.1ZM2063 314H2065V321.9H2063ZM2072.9 315H2074.9V319.9H2072.9ZM2076.9 311.9H2082.9V318H2076.9ZM2078.9 309.1H2080.9V318H2078.9ZM2083.1 311H2088.9V312.9H2083.1ZM2085 310H2087V316H2085ZM2093.9 317H2100.2V318.9H2093.9ZM2096.1 316H2098.1V321.9H2096.1ZM2100.2 313.1H2106V318.9H2100.2ZM2102.1 311H2104.1V318.9H2102.1ZM2125.9 334.1H2134.1V337.9H2125.9ZM2129 327.1H2131V338.9H2129ZM2143.1 329.2H2149.1V336.9H2143.1ZM2145.1 326.1H2147.1V336.9H2145.1ZM2172 341H2180.1V344H2172ZM2175.1 333H2177.1V347.9H2175.1ZM2212.1 354.2H2214.1V358.8H2212.1ZM2214.8 354.5H2216.8V355.7H2214.8ZM2218.1 347H2223.9V357.6H2218.1ZM2220 345.2H2222V357.6H2220ZM2237 350.7H2239V354.7H2237ZM2244 350.1H2246V354.7H2244ZM2254 353.2H2256V358.8H2254ZM2256.8 351H2258.8V355.1H2256.8ZM2259.9 347H2263.9V352H2259.9ZM2260.9 343.9H2262.9V352H2260.9ZM2264.3 343.9H2269.9V345.8H2264.3ZM2266.1 340.2H2268.1V345.8H2266.1ZM2271 340.8H2273V346.4H2271ZM2274.1 338.3H2276.1V342.7H2274.1ZM2277 337.1H2279V342.7H2277ZM2284 338.9H2286V343.9H2284ZM2310.1 352H2312.1V356.3H2310.1ZM2313 352H2315V355.7H2313ZM2317 350.7H2319V355.7H2317ZM2320.1 348.9H2322.1V352.6H2320.1ZM2345.3 362.2H2347.3V367.9H2345.3ZM2357.9 365.7H2359.9V372.9H2357.9ZM2361 362.2H2363V367.9H2361ZM2364.2 365H2366.2V367.5H2364.2ZM2371.4 365.7H2373.4V369H2371.4ZM2374.2 365H2376.2V368.8H2374.2ZM2377.3 362.2H2379.3V366.9H2377.3ZM2404 372.9H2406V377.8H2404ZM2414 371.2H2420.2V377.8H2414ZM2416.1 365.9H2418.1V377.8H2416.1ZM2425 367.1H2427V373.7H2425ZM2432.2 362.2H2434.2V371.9H2432.2Z" fill="#089981"/>
<path d="M95 209H112.8V226.6H95ZM102.9 158.4H104.9V232H102.9ZM117.9 226H135.9V300.7H117.9ZM125.9 221H127.9V307.7H125.9ZM175 291.8H188.9V340.7H175ZM180.9 291.8H182.9V347.6H180.9ZM208 333.2H220V349.6H208ZM213 331.2H215V368.8H213ZM270 305H284V331.8H270ZM276 290H278V334.8H276ZM296.9 323H304.8V330.8H296.9ZM299.9 320H301.9V333.8H299.9ZM314.1 321H322V334.6H314.1ZM317.1 320H319.1V336.1H317.1ZM335 334.1H342.9V343.7H335ZM337.9 334.1H339.9V346.9H337.9ZM352 341.2H359.9V349.7H352ZM354.9 341.2H356.9V353H354.9ZM371 336.1H376.9V337.6H371ZM372.9 331H374.9V341.9H372.9ZM378.2 336.6H383.8V338.6H378.2ZM380 336H382V343.9H380ZM386.1 339.1H391.8V340.7H386.1ZM388 339.1H390V347.9H388ZM407 326H416.9V331.8H407ZM410.9 324H412.9V338.9H410.9ZM419.9 331.1H427.9V333.6H419.9ZM422.9 327H424.9V339.8H422.9ZM444 322H451.9V323.5H444ZM446.9 320H448.9V333.9H446.9ZM463 323H469V330.8H463ZM465 318.1H467V330.8H465ZM470.9 330H478.8V332.8H470.9ZM473.9 321.2H475.9V335.9H473.9ZM480 332.1H487.9V336.6H480ZM482.9 323H484.9V338.9H482.9ZM489 335.6H495V341.9H489ZM491 335H493V346.9H491ZM502.1 336.1H509.9V353.8H502.1ZM505 333.1H507V356H505ZM512 353.1H520V361.8H512ZM515 350H517V365.9H515ZM522 360.1H527.9V361.6H522ZM524 360.1H526V370.9H524ZM529.9 363.4H535.9V365.9H529.9ZM531.9 356.1H533.9V366.9H531.9ZM537 364.9H545V376H537ZM540 361.1H542V379H540ZM547 375.3H554.9V378.8H547ZM550 375.3H552V386.9H550ZM556.4 378.2H561.9V381.9H556.4ZM558.1 372.3H560.1V382.9H558.1ZM561.9 380.2H570V381.6H561.9ZM565 380.2H567V390H565ZM576 380.2H581.8V381.6H576ZM577.9 375.1H579.9V382.9H577.9ZM590.2 375.8H593.9V377.8H590.2ZM591 375H593V382.9H591ZM594.9 377.1H599.8V378.9H594.9ZM596.3 376.1H598.3V381.9H596.3ZM608 376.1H615.9V382.9H608ZM611 372.1H613V385.9H611ZM617.9 382.2H625.9V386.9H617.9ZM620.9 380.2H622.9V390H620.9ZM628 386.9H637.8V404.9H628ZM631.9 386H633.9V406.9H631.9ZM672.1 397H678V408.9H672.1ZM674 395H676V411H674ZM705.1 389.2H709.2V396.8H705.1ZM716 389.2H718V394.8H716ZM719.1 394.2H722.9V401.9H719.1ZM723.1 400.9H728.9V404.9H723.1ZM725 400H727V407.9H725ZM728.9 403.1H734.9V404.9H728.9ZM730.9 400.9H732.9V406.9H730.9ZM743 404.1H747V408.9H743ZM753.1 405.1H761V406.9H753.1ZM756 404.1H758V415H756ZM762 405.1H766V406.9H762ZM763 402.1H765V408.9H763ZM767 407.9H774.9V419.7H767ZM770 407H772V422H770ZM775.9 419H784V425.1H775.9ZM779 415H781V427.1H779ZM790 423.1H796V424.6H790ZM792 413H794V428.1H792ZM797 424.1H802.8V433.9H797ZM798.9 423H800.9V435.9H798.9ZM808.1 432H813.9V443.8H808.1ZM810 431H812V443.8H810ZM821 438H826.8V443.8H821ZM822.9 436H824.9V444.8H822.9ZM839 437H846.9V441.8H839ZM842 424.1H844V441.8H842ZM847.1 441H853V450.8H847.1ZM849 440H851V450.8H849ZM854 450.1H859.9V457.9H854ZM856 448.1H858V457.9H856ZM868.1 443.1H869.9V450.8H868.1ZM876 440H878V446.8H876ZM887 436H892.9V440.7H887ZM889 433H891V440.7H889ZM894.1 439H897.9V445.8H894.1ZM895 438H897V446.8H895ZM899.1 440H900.9V447.8H899.1ZM905.2 444.1H909V447.8H905.2ZM906.1 444.1H908.1V448.8H906.1ZM925 428.1H932.8V434.7H925ZM927.9 413H929.9V435.7H927.9ZM942.1 426.1H947.9V427.6H942.1ZM944 418H946V428.6H944ZM961 421.1H967V424.6H961ZM963 417H965V424.6H963ZM967 424.1H968.9V429.6H967ZM970.1 426.1H971.9V433.7H970.1ZM972.9 431.2H974.9V434.7H972.9ZM982 420.1H984V425.6H982ZM998 411.2H1003.9V417.8H998ZM1000 411.2H1002V420.9H1000ZM1028.1 398.1H1034V406.9H1028.1ZM1034.2 406.1H1039.9V410H1034.2ZM1036.1 402.1H1038.1V412H1036.1ZM1040.9 408.1H1042.9V413.8H1040.9ZM1044 410.2H1046V415.8H1044ZM1047 414.2H1050.8V415.8H1047ZM1047.9 414.2H1049.9V418.8H1047.9ZM1051 416H1056.9V426.6H1051ZM1053 414.2H1055V426.6H1053ZM1068 418.1H1070V425.5H1068ZM1077 416.2H1079V422.8H1077ZM1096.2 407.3H1101.9V408.6H1096.2ZM1098.1 402H1100.1V412.7H1098.1ZM1116 404H1118V417H1116ZM1119.1 411.9H1121V415.8H1119.1ZM1123 413.1H1124.9V422.8H1123ZM1125.9 420.1H1128V425.9H1125.9ZM1138.9 418.1H1141V424H1138.9ZM1156 416.2H1161.8V417.5H1156ZM1157.9 412.2H1159.9V422.8H1157.9ZM1198.1 403H1199.8V407.9H1198.1ZM1201 401.1H1203V410.8H1201ZM1217.9 392H1222V393.9H1217.9ZM1219 389H1221V396H1219ZM1223 392.9H1224.9V398H1223ZM1227 395H1229V402H1227ZM1230 401.1H1231.9V404.9H1230ZM1233 403H1236.9V404.8H1233ZM1234 396.9H1236V404.8H1234ZM1238 402.1H1240V405.9H1238ZM1243.9 402.1H1246V410H1243.9ZM1257 403H1259V411.9H1257ZM1264 407H1266V415.8H1264ZM1267 411.9H1269V416.8H1267ZM1271 414H1273V418.9H1271ZM1277 411H1279V415.8H1277ZM1280 411.9H1282V416.8H1280ZM1284 415H1286V418.9H1284ZM1290 417H1292V421.8H1290ZM1300 417H1302V420.9H1300ZM1303 416H1305V423.2H1303ZM1306 420.1H1308V424.7H1306ZM1310 421H1312V425.9H1310ZM1313 422H1315V424.7H1313ZM1342.9 400.1H1344.9V406.9H1342.9ZM1348.9 399.1H1350.9V404.9H1348.9ZM1352.9 402H1354.9V406.9H1352.9ZM1355.8 404H1357.8V406.9H1355.8ZM1363 404H1365V411.9H1363ZM1369 400.1H1371V410H1369ZM1376 401.1H1378V406.9H1376ZM1385 401.1H1387V405.9H1385ZM1404 396.2H1406V401.8H1404ZM1407 400.1H1409V408.8H1407ZM1411 407H1413V410.9H1411ZM1414 408H1416V411.9H1414ZM1417 407H1419V415H1417ZM1420 411.9H1422V415.8H1420ZM1423.9 413.1H1425.9V417H1423.9ZM1433 406.1H1435V412.7H1433ZM1437 411.1H1439V414.9H1437ZM1440 413H1442V414.9H1440ZM1443 413H1445V415.9H1443ZM1450 414H1452V420H1450ZM1453 414.9H1455V418.8H1453ZM1456 417.9H1458V421.9H1456ZM1463 413H1465V418.8H1463ZM1466 416.9H1468V420H1466ZM1469 417.9H1471V421.9H1469ZM1482 415.9H1484V418.8H1482ZM1489 415.9H1491V418.8H1489ZM1492 416.9H1494V420H1492ZM1495 416.9H1497V420H1495ZM1502 414.9H1504V417.9H1502ZM1505 415.9H1507V420H1505ZM1515 410H1517V416.9H1515ZM1518 414H1520V416.9H1518ZM1524 413H1526V417.9H1524ZM1528 415.9H1530V417.9H1528ZM1534 412H1536V416.9H1534ZM1541 411H1543V414.9H1541ZM1550 407H1552V412H1550ZM1567 400H1572.9V404.8H1567ZM1569 396.1H1571V404.8H1569ZM1580 397.1H1584V399.9H1580ZM1581 394.1H1583V399.9H1581ZM1601 390.1H1607V395.9H1601ZM1603 389.1H1605V395.9H1603ZM1608 395.1H1610V400.9H1608ZM1612 395.1H1614V399.9H1612ZM1618 398H1620V404.1H1618ZM1630 391.1H1632V400.9H1630ZM1637 396H1639V400.9H1637ZM1643.1 394.1H1646.9V396H1643.1ZM1644 392.1H1646V398.9H1644ZM1647.9 395.1H1649.9V404.9H1647.9ZM1651.1 404.1H1658.8V407.9H1651.1ZM1653.9 398.1H1655.9V407.9H1653.9ZM1660.9 405.9H1662.9V411H1660.9ZM1664 407.9H1666V415H1664ZM1674 408H1676V411H1674ZM1687.9 404H1689.9V410H1687.9ZM1698 398.1H1700V404H1698ZM1700.9 403H1702.9V405.9H1700.9ZM1704.9 404H1706.9V405.9H1704.9ZM1733.9 380.1H1735.9V384.1H1733.9ZM1736.9 380.1H1738.9V385.9H1736.9ZM1755.9 377H1766V380.1H1755.9ZM1760 363H1762V381H1760ZM1777 373.1H1779V379.1H1777ZM1780 375H1782V379.1H1780ZM1787 377H1789V381H1787ZM1797 371.9H1799V379.1H1797ZM1800 377H1802V381H1800ZM1810 374H1812V377H1810ZM1849.1 344.1H1857V349H1849.1ZM1852 339.1H1854V349.9H1852ZM1861 345.1H1867.1V347.1H1861ZM1863 340.1H1865V347.1H1863ZM1902 321.1H1910V326.9H1902ZM1905 320.1H1907V326.9H1905ZM1911.9 325.1H1917.9V326.9H1911.9ZM1913.9 324H1915.9V328.8H1913.9ZM1918.9 328H1926.9V333.9H1918.9ZM1921.9 327H1923.9V340.1H1921.9ZM1938 328H1944.1V329.6H1938ZM1940 324H1942V332.9H1940ZM1952.1 323.2H1961.9V324.7H1952.1ZM1956 305.1H1958V331H1956ZM1963 324.2H1969V325.9H1963ZM1965 323H1967V328H1965ZM1987 311.1H1994.9V313.1H1987ZM1990 304.1H1992V316.9H1990ZM2009.9 299.1H2018V303H2009.9ZM2013 296.2H2015V305.9H2013ZM2021.1 302H2029.1V315H2021.1ZM2024.1 300.1H2026.1V315.8H2024.1ZM2031.1 314H2036.9V317H2031.1ZM2033 314H2035V321.9H2033ZM2037 316H2042.9V323H2037ZM2039 316H2041V325H2039ZM2054.1 317H2059.9V321.9H2054.1ZM2056 314H2058V323H2056ZM2067.1 315H2073V319.9H2067.1ZM2069.1 310H2071.1V319.9H2069.1ZM2089.1 311.9H2093.9V319.9H2089.1ZM2090.5 311H2092.5V319.9H2090.5ZM2106 313.1H2112V320.9H2106ZM2108 313.1H2110V323H2108ZM2113.9 320.1H2124V338.1H2113.9ZM2117.9 318.1H2119.9V341H2117.9ZM2135.1 334.1H2143.1V336.9H2135.1ZM2138.1 332.1H2140.1V336.9H2138.1ZM2150 329.2H2156.1V334.1H2150ZM2152.1 325H2154.1V334.1H2152.1ZM2157 329.9H2159V335.1H2157ZM2161 333H2163V336H2161ZM2164.1 335.1H2168.1V343H2164.1ZM2165.1 335.1H2167.1V344H2165.1ZM2169 340H2171V344H2169ZM2182.1 341H2190V351H2182.1ZM2185.1 341H2187.1V351.9H2185.1ZM2191 350H2197.1V355H2191ZM2193.1 349H2195.1V356H2193.1ZM2198.4 353H2203.7V354.5H2198.4ZM2200.1 353H2202.1V359.7H2200.1ZM2204 355.1H2209.9V358.8H2204ZM2205.9 352H2207.9V358.8H2205.9ZM2225.2 347H2231V352.6H2225.2ZM2227.1 343H2229.1V352.6H2227.1ZM2232.2 350.7H2235.7V352.6H2232.2ZM2232.9 350.7H2234.9V357H2232.9ZM2239.4 350.7H2242.9V353.2H2239.4ZM2248 350.1H2250V354.7H2248ZM2250.9 352.6H2252.9V358.8H2250.9ZM2280.1 338.3H2282.1V343.9H2280.1ZM2287.3 342H2294.7V343.9H2287.3ZM2290 336.1H2292V350.7H2290ZM2297 343H2303V352.6H2297ZM2299 341.1H2301V352.6H2299ZM2304 350.1H2306V355.1H2304ZM2307 352.6H2309V357H2307ZM2322.9 350.7H2324.9V353.2H2322.9ZM2326 353.2H2328V355.7H2326ZM2330 354.2H2332V358.8H2330ZM2333.2 357H2337V365.7H2333.2ZM2338.2 363.8H2343.8V366.9H2338.2ZM2340 362.2H2342V368.8H2340ZM2348.1 363.8H2350.1V368.1H2348.1ZM2351.1 367.1H2353.1V372.1H2351.1ZM2355.2 368.8H2357.2V371.9H2355.2ZM2368.3 365.7H2370.3V369H2368.3ZM2381 362.2H2383V366.6H2381ZM2384.2 362.5H2390.4V364.7H2384.2ZM2386.3 357H2388.3V364.7H2386.3ZM2392.1 363.8H2394.1V370H2392.1ZM2395 369H2403V375.8H2395ZM2407.1 372.1H2409.1V375.6H2407.1ZM2411.1 375H2413.1V379.1H2411.1ZM2421.9 369H2423.9V371.6H2421.9ZM2428.1 367.1H2430.1V372.9H2428.1Z" fill="#f23645"/>
<path d="M20 363H2630" stroke="#089981" stroke-width="2" stroke-dasharray="2 4" fill="none"/>
<path d="M20 854h3.500a8.500 8.500 0 0 1 8.500 8.500v19.500c0 5.500-3 8.500-7 10.500v9h-5" fill="#fff" stroke="#000" stroke-width="3"/>
<path d="M20 863.200h5.200v17.500l-5.200-2.200" fill="none" stroke="#000" stroke-width="2.400"/>
<text x="2491.7" y="167" font-size="23" fill="#000" textLength="121.2" lengthAdjust="spacingAndGlyphs">1 (15.500)</text>
<text x="2454.8" y="317" font-size="23" fill="#000" textLength="157.8" lengthAdjust="spacingAndGlyphs">0.786 (8.622)</text>
<text x="2454.8" y="433" font-size="23" fill="#000" textLength="157.8" lengthAdjust="spacingAndGlyphs">0.618 (5.440)</text>
<text x="2485.1" y="515" font-size="23" fill="#000" textLength="127.7" lengthAdjust="spacingAndGlyphs">0.5 (3.937)</text>
<text x="2454.8" y="599" font-size="23" fill="#000" textLength="157.8" lengthAdjust="spacingAndGlyphs">0.382 (2.849)</text>
<text x="2454.8" y="699" font-size="23" fill="#000" textLength="157.8" lengthAdjust="spacingAndGlyphs">0.236 (1.910)</text>
<text x="2507" y="865" font-size="23" fill="#000" textLength="105.9" lengthAdjust="spacingAndGlyphs">0 (1.000)</text>
<text x="20" y="40" font-size="24" fill="#d9d9d9" textLength="136.4" lengthAdjust="spacingAndGlyphs">BeInCrypto1</text>
<text x="164.2" y="40" font-size="24" fill="#d9d9d9" textLength="110.1" lengthAdjust="spacingAndGlyphs">published</text>
<text x="281.6" y="40" font-size="24" fill="#d9d9d9" textLength="27.5" lengthAdjust="spacingAndGlyphs">on</text>
<text x="317.3" y="40" font-size="24" fill="#d9d9d9" textLength="196.8" lengthAdjust="spacingAndGlyphs">TradingView.com,</text>
<text x="522.2" y="40" font-size="24" fill="#d9d9d9" textLength="43" lengthAdjust="spacingAndGlyphs">Feb</text>
<text x="573.1" y="40" font-size="24" fill="#d9d9d9" textLength="34.1" lengthAdjust="spacingAndGlyphs">24,</text>
<text x="615.7" y="40" font-size="24" fill="#d9d9d9" textLength="56.4" lengthAdjust="spacingAndGlyphs">2025</text>
<text x="680.7" y="40" font-size="24" fill="#d9d9d9" textLength="57.3" lengthAdjust="spacingAndGlyphs">17:19</text>
<text x="745.1" y="40" font-size="24" fill="#d9d9d9" textLength="115.8" lengthAdjust="spacingAndGlyphs">UTC+5:30</text>
<text x="36" y="93.7" font-size="23" fill="#131722" textLength="60.3" lengthAdjust="spacingAndGlyphs">BERA</text>
<text x="105.3" y="97.6" font-size="28" fill="#131722" textLength="7.5" lengthAdjust="spacingAndGlyphs">/</text>
<text x="120.8" y="93.7" font-size="23" fill="#131722" textLength="109.7" lengthAdjust="spacingAndGlyphs">TetherUS,</text>
<text x="237.7" y="93.7" font-size="23" fill="#131722" textLength="31.4" lengthAdjust="spacingAndGlyphs">1h,</text>
<text x="277.3" y="93.7" font-size="23" fill="#131722" textLength="104.6" lengthAdjust="spacingAndGlyphs">BINANCE</text>
<text x="396.8" y="93.7" font-size="23" fill="#131722" textLength="16.9" lengthAdjust="spacingAndGlyphs">O</text>
<text x="415.7" y="93.7" font-size="23" fill="#089981" textLength="62.2" lengthAdjust="spacingAndGlyphs">6.733</text>
<text x="492.9" y="93.7" font-size="23" fill="#131722" textLength="16.5" lengthAdjust="spacingAndGlyphs">H</text>
<text x="510.3" y="93.7" font-size="23" fill="#089981" textLength="65.2" lengthAdjust="spacingAndGlyphs">6.940</text>
<text x="591" y="93.7" font-size="23" fill="#131722" textLength="12" lengthAdjust="spacingAndGlyphs">L</text>
<text x="604.2" y="93.7" font-size="23" fill="#089981" textLength="64.9" lengthAdjust="spacingAndGlyphs">6.683</text>
<text x="684.5" y="93.7" font-size="23" fill="#131722" textLength="15.7" lengthAdjust="spacingAndGlyphs">C</text>
<text x="701.2" y="93.7" font-size="23" fill="#089981" textLength="64.9" lengthAdjust="spacingAndGlyphs">6.940</text>
<text x="781.1" y="93.7" font-size="23" fill="#089981" textLength="77.4" lengthAdjust="spacingAndGlyphs">+0.207</text>
<text x="868.4" y="93.7" font-size="23" fill="#089981" textLength="100.8" lengthAdjust="spacingAndGlyphs">(+3.07%)</text>
<text x="35.9" y="948" font-size="23" fill="#131722" textLength="37.6" lengthAdjust="spacingAndGlyphs">RSI</text>
<text x="82" y="948" font-size="23" fill="#131722" textLength="39.4" lengthAdjust="spacingAndGlyphs">(14,</text>
<text x="129.6" y="948" font-size="23" fill="#131722" textLength="67.3" lengthAdjust="spacingAndGlyphs">close)</text>
<text x="212.8" y="948" font-size="23" fill="#7e57c2" textLength="60.8" lengthAdjust="spacingAndGlyphs">54.74</text>
<text x="289.3" y="948" font-size="23" fill="#fdd835" textLength="62.9" lengthAdjust="spacingAndGlyphs">38.78</text>
<text x="368.2" y="947.6" font-size="19" fill="#131722" textLength="15" lengthAdjust="spacingAndGlyphs" stroke="#131722" stroke-width="0.6">∅</text>
<text x="397.7" y="947.6" font-size="19" fill="#131722" textLength="15.9" lengthAdjust="spacingAndGlyphs" stroke="#131722" stroke-width="0.6">∅</text>
<rect x="2638" y="62.500" width="104" height="52" rx="8" fill="#fff" stroke="#eff1f5" stroke-width="1.500"/>
<text x="2656.1" y="96" font-size="23" fill="#131722" textLength="63.8" lengthAdjust="spacingAndGlyphs">USDT</text>
<text x="2648.5" y="158.8" font-size="24" fill="#131722" textLength="81.8" lengthAdjust="spacingAndGlyphs">16.000</text>
<text x="2648.5" y="232.5" font-size="24" fill="#131722" textLength="81.8" lengthAdjust="spacingAndGlyphs">12.000</text>
<text x="2648.5" y="305.1" font-size="24" fill="#131722" textLength="67" lengthAdjust="spacingAndGlyphs">9.000</text>
<text x="2648.5" y="430.5" font-size="24" fill="#131722" textLength="67" lengthAdjust="spacingAndGlyphs">5.500</text>
<text x="2648.5" y="511.3" font-size="24" fill="#131722" textLength="67" lengthAdjust="spacingAndGlyphs">4.000</text>
<text x="2648.5" y="584.1" font-size="24" fill="#131722" textLength="67" lengthAdjust="spacingAndGlyphs">3.000</text>
<text x="2648.5" y="663.1" font-size="24" fill="#131722" textLength="67" lengthAdjust="spacingAndGlyphs">2.200</text>
<text x="2648.5" y="728.3" font-size="24" fill="#131722" textLength="67" lengthAdjust="spacingAndGlyphs">1.700</text>
<text x="2648.5" y="796.5" font-size="24" fill="#131722" textLength="67" lengthAdjust="spacingAndGlyphs">1.300</text>
<text x="2648.5" y="864.1" font-size="24" fill="#131722" textLength="67" lengthAdjust="spacingAndGlyphs">1.000</text>
<text x="2648.5" y="985" font-size="24" fill="#131722" textLength="67" lengthAdjust="spacingAndGlyphs">80.00</text>
<text x="2648.5" y="1079.5" font-size="24" fill="#131722" textLength="67" lengthAdjust="spacingAndGlyphs">60.00</text>
<text x="2648.5" y="1268.5" font-size="24" fill="#131722" textLength="67" lengthAdjust="spacingAndGlyphs">20.00</text>
<path d="M2632 346.500H2722a4 4 0 0 1 4 4V404a4 4 0 0 1 -4 4H2632Z" fill="#089981"/>
<text x="2648.5" y="371" font-size="24" fill="#fff" textLength="67" lengthAdjust="spacingAndGlyphs">6.940</text>
<text x="2648.6" y="399" font-size="24" fill="#fff" textLength="67.2" lengthAdjust="spacingAndGlyphs" fill-opacity="0.78">10:40</text>
<rect x="2632" y="1079.500" width="94.500" height="33.500" rx="3.500" fill="#7e57c2"/>
<text x="2648.5" y="1104.5" font-size="24" fill="#fff" textLength="67" lengthAdjust="spacingAndGlyphs">54.74</text>
<rect x="2632" y="1155.500" width="94.500" height="33.500" rx="3.500" fill="#fdd835"/>
<text x="2648.5" y="1180.5" font-size="24" fill="#000" textLength="67" lengthAdjust="spacingAndGlyphs">38.78</text>
<text x="191.8" y="1326.3" font-size="24" fill="#131722" textLength="13.1" lengthAdjust="spacingAndGlyphs">7</text>
<text x="650.6" y="1326.3" font-size="24" fill="#131722" textLength="14.6" lengthAdjust="spacingAndGlyphs">9</text>
<text x="943.1" y="1326.3" font-size="24" fill="#131722" textLength="26.5" lengthAdjust="spacingAndGlyphs">11</text>
<text x="1169.7" y="1326.3" font-size="24" fill="#131722" textLength="27.9" lengthAdjust="spacingAndGlyphs">13</text>
<text x="1340.1" y="1326.3" font-size="24" fill="#131722" textLength="28.3" lengthAdjust="spacingAndGlyphs">15</text>
<text x="1497.4" y="1326.3" font-size="24" fill="#131722" textLength="30" lengthAdjust="spacingAndGlyphs" font-weight="bold">17</text>
<text x="1688.5" y="1326.3" font-size="24" fill="#131722" textLength="28.1" lengthAdjust="spacingAndGlyphs">19</text>
<text x="1958.1" y="1326.3" font-size="24" fill="#131722" textLength="27.4" lengthAdjust="spacingAndGlyphs">21</text>
<text x="2258.1" y="1326.3" font-size="24" fill="#131722" textLength="27.9" lengthAdjust="spacingAndGlyphs">23</text>
<text x="2449.5" y="1326.3" font-size="24" fill="#131722" textLength="28.2" lengthAdjust="spacingAndGlyphs">25</text>
<path d="M20 1368.200h16.500v19.200h-8.900v-11.400h-7.600zM49.700 1368.200h9.300l-7.800 19.200h-9.300z" fill="#d9d9d9"/><circle cx="42.200" cy="1372.100" r="3.900" fill="#d9d9d9"/>
<text x="67.7" y="1389" font-size="25.5" fill="#d9d9d9" textLength="146.3" lengthAdjust="spacingAndGlyphs" stroke="#d9d9d9" stroke-width="0.7">TradingView</text>
</svg></body></html>
